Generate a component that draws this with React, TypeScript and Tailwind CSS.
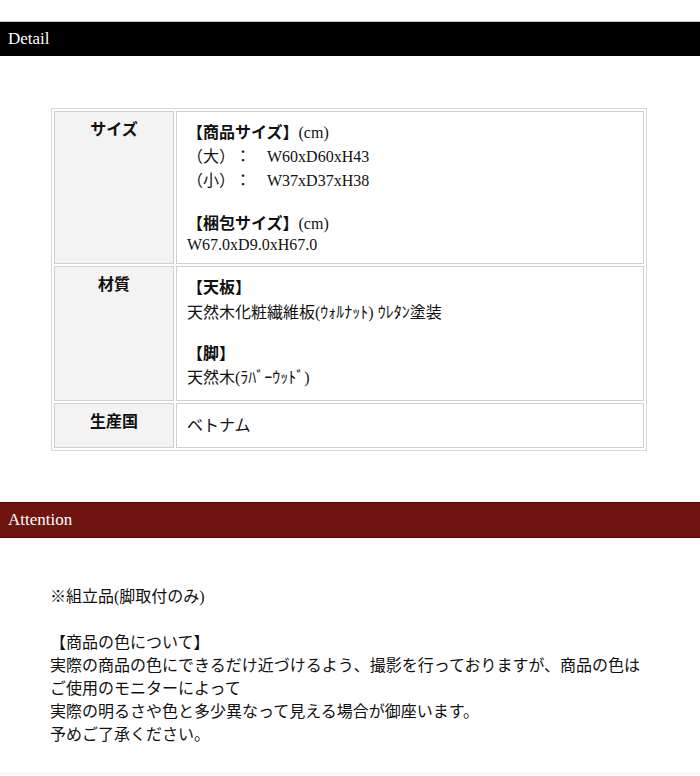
import React from "react";

const serif = { fontFamily: '"Liberation Serif", "Noto Sans CJK JP", serif' };

function Bar({ title, className }: { title: string; className: string }) {
  return (
    <div className={className}>
      <span className="pl-[8px] text-[17px] text-white" style={{ fontFamily: '"Liberation Serif", serif' }}>
        {title}
      </span>
    </div>
  );
}

const th =
  "w-[120px] border border-[#d0d0d0] bg-[#f3f3f3] pt-[6px] align-top text-center text-[16px] font-bold leading-[24px] text-[#111]";
const td = "border border-[#d0d0d0] bg-white pl-[10px] align-middle text-[16px] text-[#111]";

export default function App() {
  return (
    <div className="min-h-[776px] bg-white text-[#111] [text-spacing-trim:space-all]" style={serif}>
      <Bar
        title="Detail"
        className="mt-[21px] flex h-[35px] items-center border-t border-[#c8c8c8] bg-black"
      />

      <table className="ml-[51px] mt-[52px] w-[596px] border-separate border-spacing-[2px] border border-[#d8d8d8]">
        <tbody>
          <tr>
            <th className={th}>サイズ</th>
            <td className={`${td} pt-[8px] pb-[8px]`}>
              <div className="h-[25px] leading-[25px]">
                <b>【商品サイズ】</b>(cm)
              </div>
              <div className="h-[24px] leading-[24px]">（大）：　W60xD60xH43</div>
              <div className="h-[24px] leading-[24px]">（小）：　W37xD37xH38</div>
              <div className="h-[19px]" />
              <div className="h-[23px] leading-[23px]">
                <b>【梱包サイズ】</b>(cm)
              </div>
              <div className="h-[20px] leading-[20px]">W67.0xD9.0xH67.0</div>
            </td>
          </tr>
          <tr>
            <th className={th}>材質</th>
            <td className={`${td} pt-[8px] pb-[10px]`}>
              <div className="h-[25px] leading-[25px]">
                <b>【天板】</b>
              </div>
              <div className="h-[25px] leading-[25px]">天然木化粧繊維板(ｳｫﾙﾅｯﾄ) ｳﾚﾀﾝ塗装</div>
              <div className="h-[17px]" />
              <div className="h-[23px] leading-[23px]">
                <b>【脚】</b>
              </div>
              <div className="h-[25px] leading-[25px]">天然木(ﾗﾊﾞｰｳｯﾄﾞ)</div>
            </td>
          </tr>
          <tr>
            <th className={th}>生産国</th>
            <td className={`${td} py-[10px]`}>
              <div className="h-[23px] leading-[23px]">ベトナム</div>
            </td>
          </tr>
        </tbody>
      </table>

      <Bar
        title="Attention"
        className="mt-[51px] flex h-[36px] items-center border-y border-[#5a0b08] bg-[#6e1510]"
      />

      <div className="pl-[50px] pt-[47px] text-[16px] leading-[23px] text-[#111]">
        <div>※組立品(脚取付のみ)</div>
        <div className="h-[23px]" />
        <div>【商品の色について】</div>
        <div>実際の商品の色にできるだけ近づけるよう、撮影を行っておりますが、商品の色は</div>
        <div>ご使用のモニターによって</div>
        <div>実際の明るさや色と多少異なって見える場合が御座います。</div>
        <div>予めご了承ください。</div>
      </div>

      <div className="mt-[27px] h-[3px] border-t border-[#f0f0f0]" />
    </div>
  );
}
